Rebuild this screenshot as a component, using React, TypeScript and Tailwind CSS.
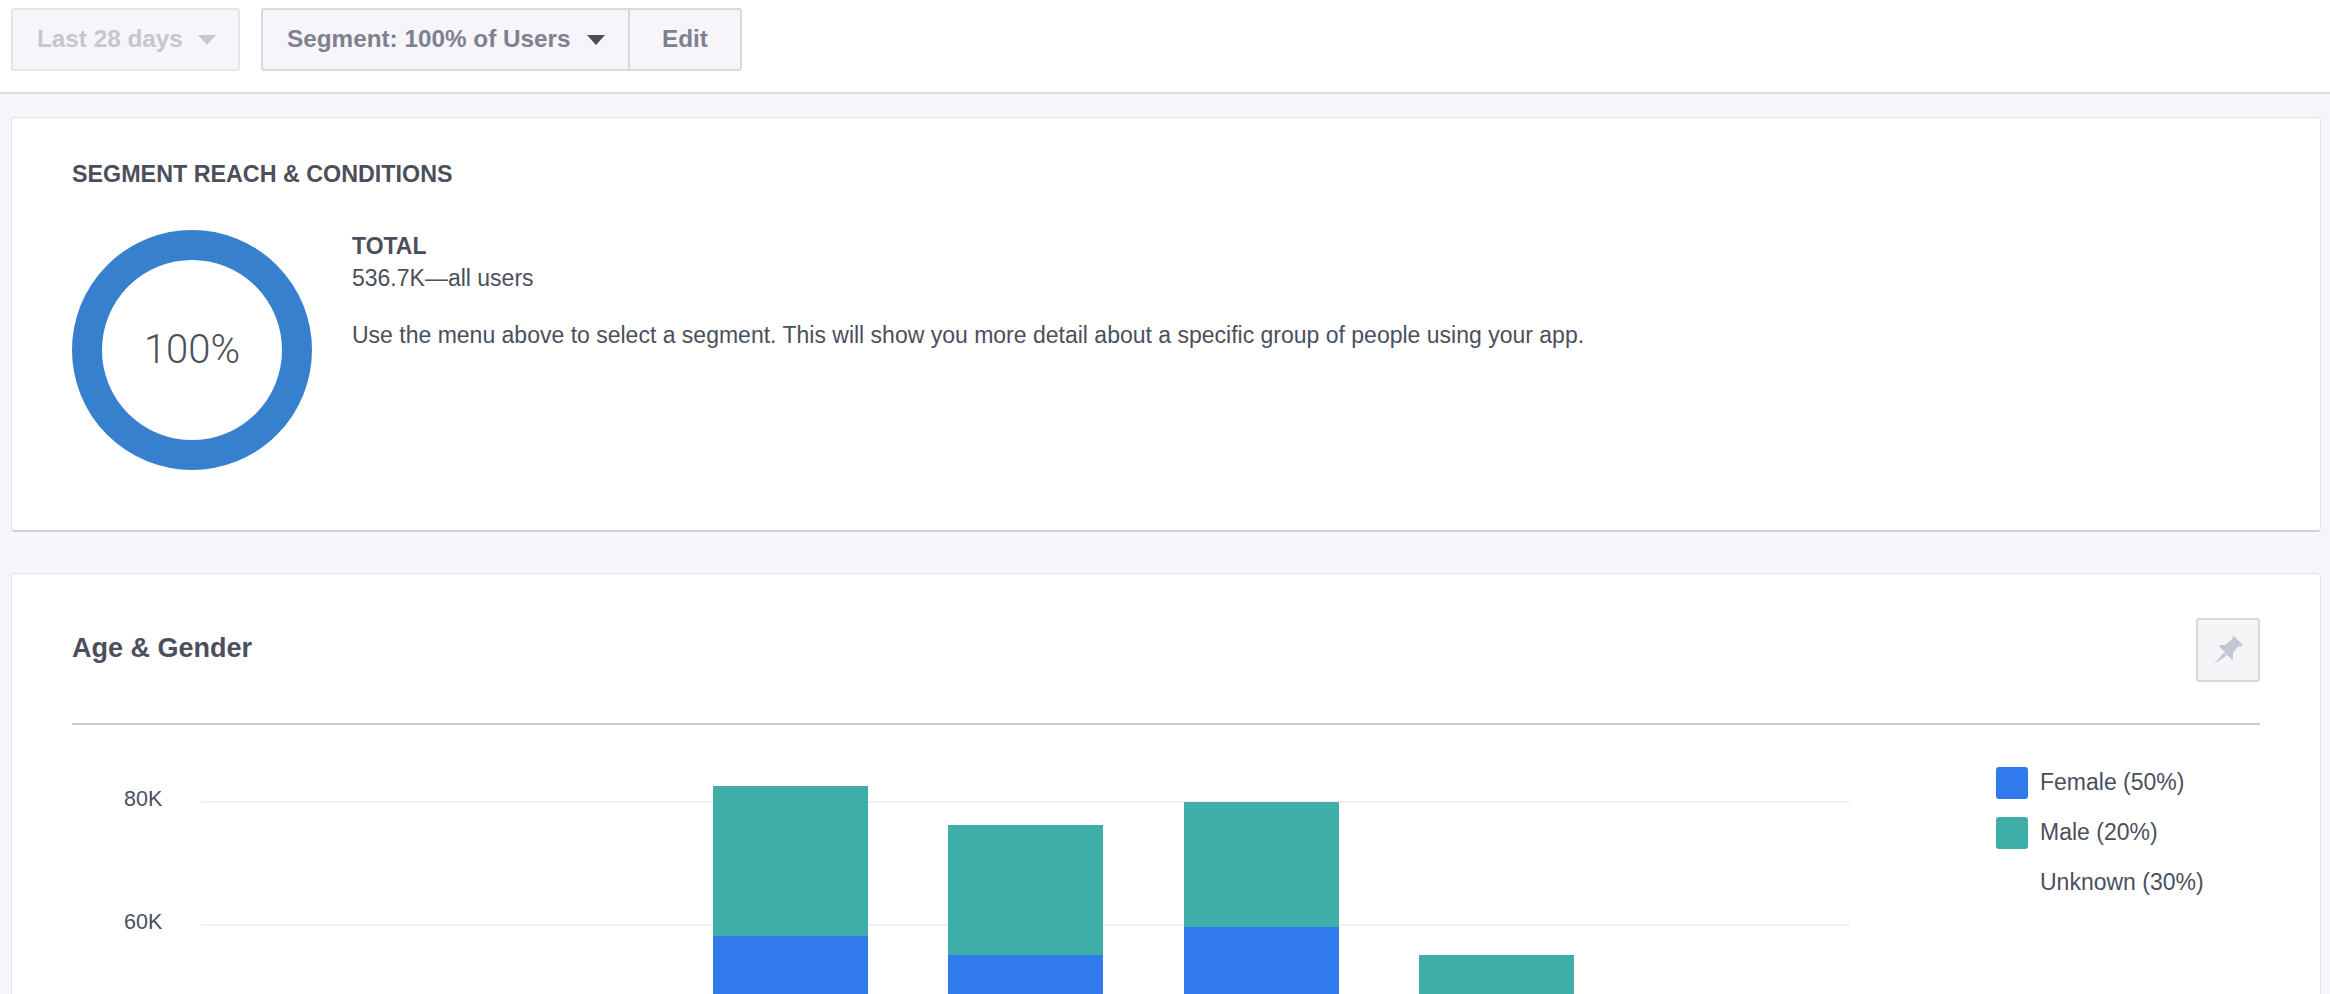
const Caret = ({ className }: { className: string }) => (
  <svg width="18" height="10" viewBox="0 0 18 10" className={className}>
    <path d="M0 0H18L9 10Z" fill="currentColor" />
  </svg>
);

const Pin = () => (
  <svg width="29" height="28" viewBox="0 0 29 28" fill="currentColor">
    <path d="M20 0L28.7 9L26 11L24.5 10L19 17L19 22L18 24L4.7 10L7 9L11 9L18 3.5L18 2Z" />
    <path d="M10 16.5L13 19.5L0 28Z" />
  </svg>
);

const barsX = 201;
const bars = [
  { x: 713, top: 786, split: 936 },
  { x: 948, top: 825, split: 955 },
  { x: 1184, top: 802, split: 927 },
  { x: 1419, top: 955, split: 1100 },
];

const Chart = () => (
  <svg width="1649" height="270" viewBox="0 725 1649 270" className="block shrink-0">
    <rect x="0" y="801" width="1649" height="2" fill="#f1f0f4" />
    <rect x="0" y="924" width="1649" height="2" fill="#f1f0f4" />
    {bars.map((b) => (
      <g key={b.x}>
        <rect x={b.x - barsX} y={b.top} width="155" height={b.split - b.top} fill="#3fada8" />
        <rect x={b.x - barsX} y={b.split} width="155" height="120" fill="#317aec" />
      </g>
    ))}
  </svg>
);

const Legend = ({ color, label }: { color?: string; label: string }) => (
  <div className="flex h-[32px] items-center gap-[12px]">
    <div className={`h-[32px] w-[32px] rounded-[3px] ${color ?? ""}`} />
    <span className="relative top-[-1px] text-[23px] leading-[32px] text-[#4b4f5c]">{label}</span>
  </div>
);

export default function App() {
  return (
    <div className="h-[994px] w-[2330px] overflow-hidden bg-[#f7f5f9] font-['Liberation_Sans',Arial,sans-serif] text-[#4b4f5c]">
      <header className="flex h-[94px] items-start gap-[21px] border-b-2 border-[#dcdbe0] bg-white pl-[11px] pt-[8px]">
        <button className="flex h-[63px] w-[229px] items-center rounded-[3px] border-2 border-[#e5e5ea] bg-[#f7f5f9] pl-[24px] text-[24.3px] font-bold text-[#c4c6d0]">
          Last 28 days
          <Caret className="ml-[15px] text-[#c6c7d0]" />
        </button>
        <div className="flex h-[63px] w-[481px] items-stretch rounded-[3px] border-2 border-[#d8d8dd] bg-[#f7f5f9] text-[24.3px] font-bold text-[#7d8190]">
          <button className="flex w-[367px] items-center border-r-2 border-[#d8d8dd] pl-[24px]">
            Segment: 100% of Users
            <Caret className="ml-[16px] text-[#4b4c57]" />
          </button>
          <button className="flex-1">Edit</button>
        </div>
      </header>

      <main className="flex flex-col gap-[41px] pl-[11px] pr-[9px] pt-[23px]">
        <section className="h-[415px] rounded-[4px] border border-b-2 border-[#e3e3e8] border-b-[#d0d0d4] bg-white pl-[60px] pt-[43px]">
          <h2 className="text-[23.3px] font-bold leading-[26px] text-[#4b4f5c]">SEGMENT REACH &amp; CONDITIONS</h2>
          <div className="mt-[43px] flex gap-[40px]">
            <div className="flex h-[240px] w-[240px] shrink-0 items-center justify-center rounded-full border-[30px] border-[#3680ce] bg-white">
              <span className="font-['Roboto',sans-serif] text-[40px] font-light text-[#4b4f5c]">100%</span>
            </div>
            <div className="text-[23px] leading-[32px] text-[#4b4f5c]">
              <div className="font-bold">TOTAL</div>
              <div>536.7K—all users</div>
              <p className="mt-[25px]">Use the menu above to select a segment. This will show you more detail about a specific group of people using your app.</p>
            </div>
          </div>
        </section>

        <section className="h-[500px] rounded-[4px] border border-[#e3e3e8] bg-white px-[60px] pt-[44px]">
          <div className="flex h-[107px] items-start justify-between border-b-2 border-[#cdcdcf]">
            <h2 className="pt-[15px] text-[27px] font-bold leading-[30px]">Age &amp; Gender</h2>
            <button className="flex h-[64px] w-[64px] items-center justify-center rounded-[3px] border-2 border-[#d8d8dd] bg-[#f5f5f7] text-[#c4c7d1]">
              <Pin />
            </button>
          </div>
          <div className="flex">
            <div className="flex w-[129px] shrink-0 flex-col gap-[91px] pl-[52px] pt-[58px] text-[21.5px] leading-[32px] text-[#4b4f5c]">
              <span>80K</span>
              <span>60K</span>
            </div>
            <Chart />
            <div className="ml-[146px] flex flex-col gap-[18px] pt-[42px]">
              <Legend color="bg-[#317aec]" label="Female (50%)" />
              <Legend color="bg-[#3fada8]" label="Male (20%)" />
              <Legend label="Unknown (30%)" />
            </div>
          </div>
        </section>
      </main>
    </div>
  );
}
